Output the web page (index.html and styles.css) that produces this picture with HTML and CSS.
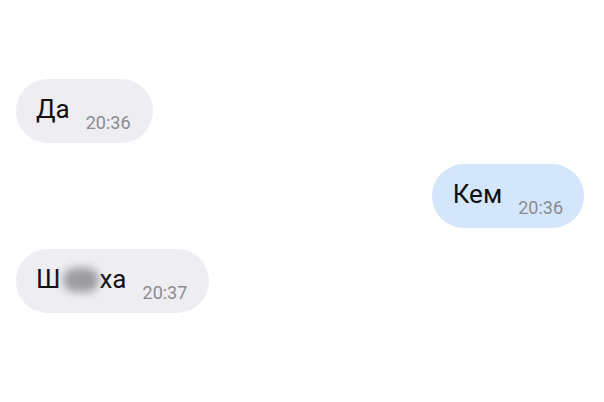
FILE: index.html
```html
<html>
   <head>
      <link rel="stylesheet" href="styles.css">
   </head>
   <body>
      <div id="chat">
         <div class="row in">
            <div class="bubble">
               <span class="text">Да</span>
               <span class="time">20:36</span>
            </div>
         </div>
         <div class="row out">
            <div class="bubble">
               <span class="text">Кем</span>
               <span class="time">20:36</span>
            </div>
         </div>
         <div class="row in">
            <div class="bubble">
               <span class="text">Ш<span class="hidden"></span>ха</span>
               <span class="time">20:37</span>
            </div>
         </div>
      </div>
   </body>
</html>
```

FILE: styles.css
```css
*
{
   margin: 0px;
   box-sizing: border-box;
}
body
{
   font-family: Roboto, "Noto Sans", sans-serif;
   background-color: #ffffff;
}
#chat
{
   display: flex;
   flex-direction: column;
   gap: 21px;
   padding: 79px 20px 0px 16px;
}
.row
{
   display: flex;
}
.row.out
{
   justify-content: flex-end;
}
.bubble
{
   display: flex;
   align-items: flex-start;
   height: 64px;
   padding: 15px 22px 0px 20px;
   border-radius: 32px;
   background-color: #eeeef2;
}
.out .bubble
{
   background-color: #d4e6fb;
   padding-left: 21px;
   padding-right: 21px;
}
.text
{
   font-size: 26px;
   line-height: 30px;
   color: #111111;
   display: flex;
   align-items: center;
}
.time
{
   font-size: 18px;
   line-height: 20px;
   color: #8b8b90;
   margin-top: 19px;
   margin-left: 16px;
}
.hidden
{
   display: inline-block;
   width: 36px;
   height: 24px;
   margin: 1px 0px 0px 3px;
   border-radius: 12px;
   background-color: #9c9ca0;
   filter: blur(4px);
}
```
